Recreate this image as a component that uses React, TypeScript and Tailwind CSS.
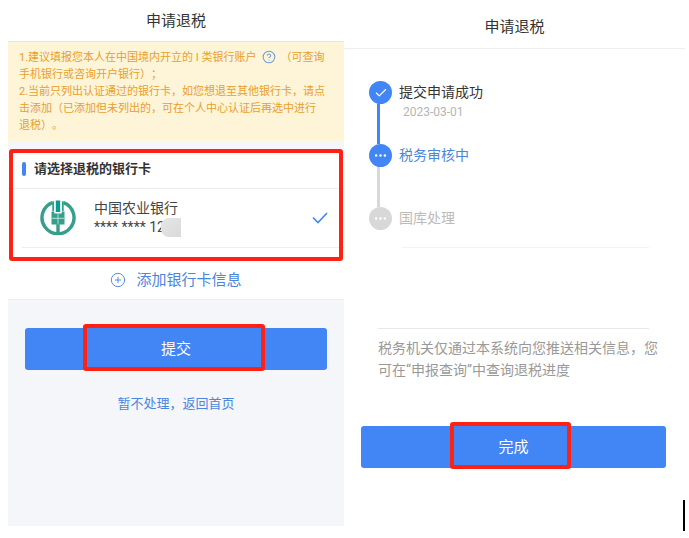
import React from "react";
import { Check, CirclePlus, CircleQuestionMark, Ellipsis } from "lucide-react";
import clsx from "clsx";

type StepState = "done" | "active" | "pending";

interface Step {
  title: string;
  date?: string;
  state: StepState;
}

const steps: Step[] = [
  { title: "提交申请成功", date: "2023-03-01", state: "done" },
  { title: "税务审核中", state: "active" },
  { title: "国库处理", state: "pending" },
];

const BankLogo: React.FC = () => (
  <svg viewBox="0 0 36 36" className="h-9 w-9 shrink-0" aria-hidden="true">
    <path d="M12.6 2.6A16 16 0 1 0 23.4 2.6" fill="none" stroke="#359f8b" strokeWidth="3.4" />
    <path d="M13.2 1.2V11M22.8 1.2V11" stroke="#359f8b" strokeWidth="1.8" />
    <path d="M15.8 .6h4.4V12h-4.4z" fill="#089c93" />
    <path d="M11.5 11.5h2.8v1.9h7.4v-1.9h2.8v12.9h-4.8V34h-3.4v-9.6h-4.8z" fill="#359f8b" />
    <path d="M12 18.3h12M18 13.4v11" stroke="#d3ece6" strokeWidth=".8" />
  </svg>
);

const PrimaryButton: React.FC<{ label: string; frame: string }> = ({ label, frame }) => (
  <button type="button" className="relative block h-[42px] w-full rounded-[3px] bg-[#4285f4] text-[15px] text-white">
    {label}
    <span className={clsx("pointer-events-none absolute rounded-[3px] border-4 border-[#ff2113]", frame)} />
  </button>
);

const RefundForm: React.FC = () => (
  <section className="ml-2 bg-[#f5f6fa] pb-[111px]">
    <h1 className="h-[42px] border-b border-[#e6e6e6] bg-white text-center text-[15px] leading-[42px] text-[#333]">
      申请退税
    </h1>

    <div className="bg-[#fef5d9] px-[11px] py-[7px] text-[11px] leading-[17px] whitespace-nowrap text-[#e8a02a]">
      <p>
        1.建议填报您本人在中国境内开立的 I 类银行账户
        <CircleQuestionMark className="mx-[5px] inline h-[14px] w-[14px] align-[-3px] text-[#6f9ddb]" strokeWidth={1.8} />
        （可查询
        <br />
        手机银行或咨询开户银行）；
      </p>
      <p>
        2.当前只列出认证通过的银行卡，如您想退至其他银行卡，请点
        <br />
        击添加（已添加但未列出的，可在个人中心认证后再选中进行
        <br />
        退税）。
      </p>
    </div>

    <div role="radiogroup" aria-labelledby="card-title" className="relative mt-2 bg-white pb-[13px]">
      <div className="flex h-10 items-center gap-2 border-b border-[#eee] pl-[14px]">
        <span className="h-[14px] w-1 rounded-xs bg-[#4285f4]" />
        <h2 id="card-title" className="text-[13px] font-bold text-[#333]">
          请选择退税的银行卡
        </h2>
      </div>
      <label className="ml-[14px] flex h-[59px] cursor-pointer items-center border-b border-[#eee] pr-4 pl-[18px]">
        <input type="radio" name="card" defaultChecked className="peer sr-only" />
        <BankLogo />
        <span className="ml-[18px] flex-1 text-[14px] leading-[19px] text-[#444]">
          中国农业银行
          <span className="flex items-center">
            **** **** 12
            <span className="-ml-1 h-[19px] w-5 rounded-l-lg bg-linear-to-br from-[#e6e6e6] to-[#dadada]" />
          </span>
        </span>
        <svg viewBox="0 0 16 12" className="invisible h-3 w-4 peer-checked:visible" aria-hidden="true">
          <path d="M1 5.5 6 10.5 15 1" fill="none" stroke="#4285f4" strokeWidth="1.6" />
        </svg>
      </label>
      <span className="pointer-events-none absolute inset-x-px inset-y-0 rounded-[3px] border-4 border-[#ff2113]" />
    </div>

    <button
      type="button"
      className="flex h-[39px] w-full items-center justify-center gap-[10px] border-b border-[#eee] bg-white text-[15px] text-[#4a87dc]"
    >
      <CirclePlus className="h-4 w-4" strokeWidth={1.4} />
      添加银行卡信息
    </button>

    <div className="px-[17px] pt-7 text-center">
      <PrimaryButton label="提交" frame="-top-1 -bottom-px left-[58px] right-[62px]" />
      <a href="#home" className="mt-6 inline-block text-[13px] leading-5 text-[#4a87dc]">
        暂不处理，返回首页
      </a>
    </div>
  </section>
);

const StepItem: React.FC<{ step: Step; last: boolean }> = ({ step, last }) => (
  <li className="flex gap-[7px]">
    <div className="flex w-[23px] flex-col items-center">
      <span
        className={clsx(
          "flex h-[23px] w-[23px] items-center justify-center rounded-full text-white",
          step.state === "pending" ? "bg-[#d8d8d8]" : "bg-[#4285f4]"
        )}
      >
        {step.state === "done" ? (
          <Check className="h-[14px] w-[14px]" strokeWidth={2} />
        ) : (
          <Ellipsis className="h-[15px] w-[15px]" strokeWidth={2} />
        )}
      </span>
      {!last && (
        <span className={clsx("mr-1 h-10 w-[3px]", step.state === "done" ? "bg-[#4285f4]" : "bg-[#d8d8d8]")} />
      )}
    </div>
    <div>
      <p
        className={clsx(
          "text-[14px] leading-[23px]",
          step.state === "done" && "text-[#333]",
          step.state === "active" && "text-[#4a87dc]",
          step.state === "pending" && "text-[#bbb]"
        )}
      >
        {step.title}
      </p>
      {step.date && <p className="pl-1 text-[12px] leading-4 text-[#b5b5b5]">{step.date}</p>}
    </div>
  </li>
);

const RefundProgress: React.FC = () => (
  <section className="mr-1">
    <h1 className="h-[49px] border-b border-[#eee] pt-[6px] text-center text-[15px] leading-[42px] text-[#333]">
      申请退税
    </h1>

    <ol className="pt-8 pl-[25px]">
      {steps.map((step, i) => (
        <StepItem key={step.title} step={step} last={i === steps.length - 1} />
      ))}
    </ol>
    <hr className="mt-[17px] mr-9 ml-[58px] border-[#f3f3f3]" />

    <hr className="mt-20 mr-9 ml-[34px] border-[#e8e8e8]" />
    <p className="mt-2 ml-[34px] text-[14px] leading-[22px] whitespace-nowrap text-[#999]">
      税务机关仅通过本系统向您推送相关信息，您
      <br />
      可在“申报查询”中查询退税进度
    </p>

    <div className="pt-[45px] pr-[19px] pl-[17px]">
      <PrimaryButton label="完成" frame="-top-1 -bottom-px left-[89px] right-[95px]" />
    </div>
    <div className="mt-8 ml-auto h-[31px] w-0.5 bg-black" />
  </section>
);

export default function App() {
  return (
    <main className="grid min-h-screen grid-cols-[344fr_345fr] items-start bg-white font-[Roboto,'Noto_Sans_CJK_SC',sans-serif] [text-spacing-trim:space-all]">
      <RefundForm />
      <RefundProgress />
    </main>
  );
}
